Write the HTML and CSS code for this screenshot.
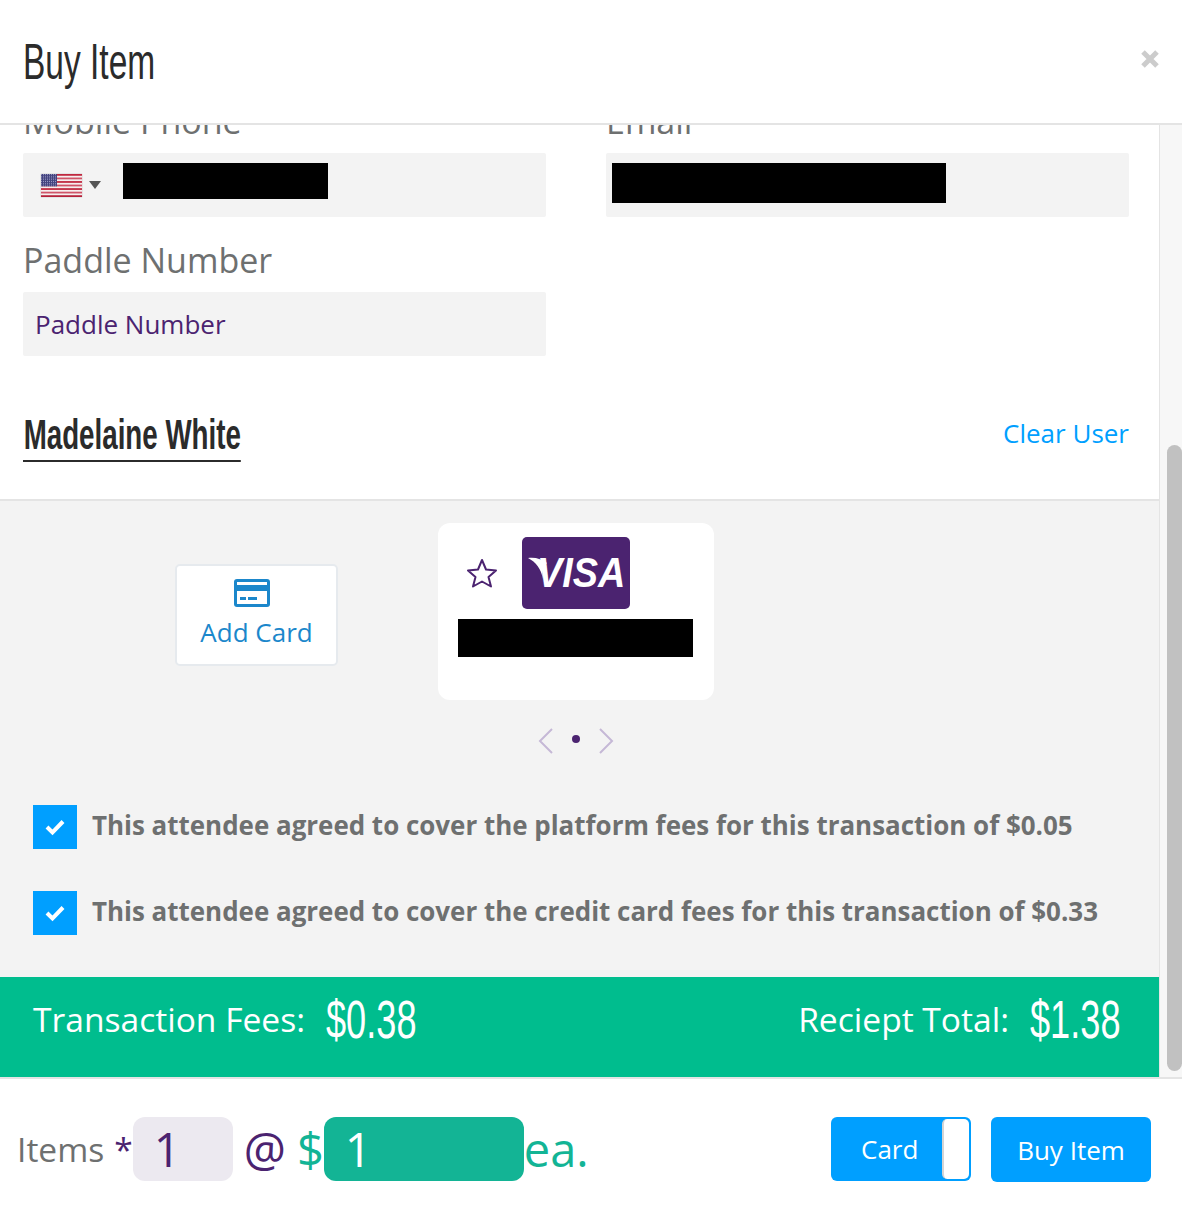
FILE: index.html
```html
<!DOCTYPE html>
<html>
<head>
  <title>Buy Item</title>
  <link rel="stylesheet" href="styles.css">
</head>
<body>
  <div class="modal">
    <div class="modal-header">
      <h1 class="modal-title">Buy Item</h1>
      <svg class="modal-close" width="20" height="20" viewBox="0 0 20 20">
        <path d="M3 3 L17 17 M17 3 L3 17" fill="none" stroke="#cccccc" stroke-width="5"/>
      </svg>
    </div>

    <div class="modal-middle">
      <div class="pane">
        <div class="pane-top">
          <div class="field-grid">
            <div class="field">
              <label class="field-label">Mobile Phone</label>
              <div class="field-box phone-box">
                <svg class="flag" width="41" height="23" viewBox="0 0 41 26" preserveAspectRatio="none">
                  <defs>
                    <pattern id="stars" width="2" height="2" patternUnits="userSpaceOnUse">
                      <rect width="2" height="2" fill="#44447f"/>
                      <rect width="1" height="1" fill="#9a9ac4"/>
                    </pattern>
                  </defs>
                  <rect width="41" height="26" fill="#f6eeee"/>
                  <rect y="0" width="41" height="2" fill="#c0283f"/>
                  <rect y="4" width="41" height="2" fill="#cf5468"/>
                  <rect y="8" width="41" height="2" fill="#c0283f"/>
                  <rect y="12" width="41" height="2" fill="#cf5468"/>
                  <rect y="16" width="41" height="2" fill="#c0283f"/>
                  <rect y="20" width="41" height="2" fill="#cf5468"/>
                  <rect y="24" width="41" height="2" fill="#b5213a"/>
                  <rect width="16" height="14" fill="url(#stars)"/>
                </svg>
                <span class="caret"></span>
                <span class="redact redact-phone"></span>
              </div>
            </div>
            <div class="field">
              <label class="field-label">Email</label>
              <div class="field-box email-box">
                <span class="redact redact-email"></span>
              </div>
            </div>
            <div class="field">
              <label class="field-label">Paddle Number</label>
              <div class="field-box paddle-box">Paddle Number</div>
            </div>
          </div>

          <div class="user-row">
            <span class="user-name">Madelaine White</span>
            <a class="clear-user">Clear User</a>
          </div>
        </div>

        <div class="pane-gray">
          <div class="card-row">
            <div class="add-card">
              <svg class="add-card-icon" width="36" height="28" viewBox="0 0 36 28">
                <rect width="36" height="28" rx="3" fill="#1b87cb"/>
                <rect x="3" y="3" width="30" height="3" fill="#fff"/>
                <rect x="3" y="12" width="30" height="13" fill="#fff"/>
                <rect x="6" y="18" width="6" height="3" fill="#1b87cb"/>
                <rect x="14" y="18" width="9" height="3" fill="#1b87cb"/>
              </svg>
              <span class="add-card-text">Add Card</span>
            </div>
            <div class="saved-card">
              <div class="saved-card-top">
                <svg class="star" width="32" height="30" viewBox="0 0 32 30">
                  <path d="M16 2 L20 11.5 L30 12.5 L22.5 19 L25 28.5 L16 23.5 L7 28.5 L9.5 19 L2 12.5 L12 11.5 Z" fill="none" stroke="#4b2370" stroke-width="2" stroke-linejoin="round"/>
                </svg>
                <div class="visa-logo">
                  <svg class="visa-swoosh" width="22" height="26" viewBox="0 0 22 26">
                    <path d="M1 1 C8 0 15 2 20 6 C16 9 15 14 16 22 C14 12 9 5 1 1 Z" fill="#fff"/>
                  </svg>
                  <span class="visa-text">VISA</span>
                </div>
              </div>
              <span class="redact redact-card"></span>
            </div>
          </div>

          <div class="carousel-nav">
            <svg width="16" height="28" viewBox="0 0 16 28"><path d="M14 2 L2 14 L14 26" fill="none" stroke="#c5b8d6" stroke-width="2"/></svg>
            <span class="carousel-dot"></span>
            <svg width="16" height="28" viewBox="0 0 16 28"><path d="M2 2 L14 14 L2 26" fill="none" stroke="#c5b8d6" stroke-width="2"/></svg>
          </div>

          <div class="agree-row">
            <span class="checkbox">
              <svg width="22" height="18" viewBox="0 0 22 18"><path d="M3 9 L8.5 14.5 L19 3.5" fill="none" stroke="#fff" stroke-width="4"/></svg>
            </span>
            <span class="agree-text">This attendee agreed to cover the platform fees for this transaction of $0.05</span>
          </div>
          <div class="agree-row">
            <span class="checkbox">
              <svg width="22" height="18" viewBox="0 0 22 18"><path d="M3 9 L8.5 14.5 L19 3.5" fill="none" stroke="#fff" stroke-width="4"/></svg>
            </span>
            <span class="agree-text">This attendee agreed to cover the credit card fees for this transaction of $0.33</span>
          </div>
        </div>

        <div class="totals">
          <div class="total-item">
            <span class="total-label">Transaction Fees:</span>
            <span class="total-value">$0.38</span>
          </div>
          <div class="total-item">
            <span class="total-label">Reciept Total:</span>
            <span class="total-value">$1.38</span>
          </div>
        </div>
      </div>

      <div class="scroll-track">
        <div class="scroll-thumb"></div>
      </div>
    </div>

    <div class="modal-footer">
      <div class="price-line">
        <span class="items-label">Items</span>
        <span class="items-star">*</span>
        <span class="qty-input">1</span>
        <span class="at-sign">@</span>
        <span class="dollar">$</span>
        <span class="price-input">1</span>
        <span class="each">ea.</span>
      </div>
      <div class="footer-actions">
        <div class="pay-toggle">
          <span class="pay-toggle-label">Card</span>
          <span class="pay-toggle-knob"></span>
        </div>
        <button class="buy-btn">Buy Item</button>
      </div>
    </div>
  </div>
</body>
</html>
```

FILE: styles.css
```css
* {
  box-sizing: border-box;
}

html, body {
  height: 100%;
}

body {
  margin: 0;
  background-color: #ffffff;
  color: #6e7070;
  font-family: 'Open Sans', sans-serif;
  overflow: hidden;
}

.modal {
  display: flex;
  flex-direction: column;
  width: 1182px;
  height: 1226px;
}

.modal-header {
  display: flex;
  align-items: center;
  justify-content: space-between;
  height: 125px;
  flex: none;
  padding: 1px 22px 0 23px;
  border-bottom: 2px solid #e4e4e4;
}

/* no condensed font here, so the heading fonts are squeezed */
.modal-title {
  margin: 0;
  font-family: 'Liberation Sans', sans-serif;
  font-weight: 400;
  font-size: 50px;
  color: #2b2b2b;
  white-space: nowrap;
  transform: scaleX(.67);
  transform-origin: left center;
}

.modal-close {
  margin-top: -7px;
}

.modal-middle {
  display: flex;
  height: 952px;
  flex: none;
}

.pane {
  width: 1160px;
  border-right: 1px solid #e4e4e4;
  overflow: hidden;
}

.scroll-track {
  width: 22px;
  padding: 320px 0 6px 7px;
  background: #f7f7f7;
}

.scroll-thumb {
  height: 100%;
  background: #c1c1c1;
  border-radius: 8px;
}

.pane-top {
  height: 400px;
  padding: 0 30px 0 23px;
  border-bottom: 2px solid #e4e4e4;
}

/* the pane is scrolled a little, label is cut at the top */
.field-grid {
  display: grid;
  grid-template-columns: 523px 523px;
  column-gap: 60px;
  row-gap: 23px;
  margin-top: -24px;
}

.field-label {
  display: block;
  height: 52px;
  font-size: 34px;
  line-height: 40px;
}

.field-box {
  display: flex;
  align-items: center;
  height: 64px;
  background: #f3f3f3;
  border-radius: 2px;
}

.phone-box {
  padding-left: 18px;
}

.email-box {
  padding-left: 6px;
}

.paddle-box {
  padding-left: 12px;
  font-size: 26px;
  color: #4b2370;
}

.flag {
  box-shadow: 0 0 1px #999;
}

.caret {
  width: 0;
  height: 0;
  margin: 0 22px 0 7px;
  border-left: 6px solid transparent;
  border-right: 6px solid transparent;
  border-top: 8px solid #555;
}

.redact {
  display: block;
  background: #000;
}

.redact-phone {
  width: 205px;
  height: 36px;
  margin-top: -8px;
}

.redact-email {
  width: 334px;
  height: 40px;
  margin-top: -5px;
}

.redact-card {
  width: 235px;
  height: 38px;
  margin: 10px 0 0 20px;
}

.user-row {
  display: flex;
  align-items: center;
  justify-content: space-between;
  margin-top: 56px;
}

.user-name {
  padding: 0 0 2px 1px;
  border-bottom: 2px solid #2b2b2b;
  font-family: 'Liberation Sans', sans-serif;
  font-weight: 700;
  font-size: 42px;
  line-height: 46px;
  color: #2b2b2b;
  white-space: nowrap;
  transform: scaleX(.66);
  transform-origin: left center;
}

.clear-user {
  margin-top: -8px;
  font-size: 26px;
  color: #009fff;
}

.pane-gray {
  height: 476px;
  padding-top: 22px;
  background: #f3f3f3;
}

.card-row {
  display: flex;
  align-items: flex-start;
  gap: 100px;
  padding-left: 175px;
}

.add-card {
  display: flex;
  flex-direction: column;
  align-items: center;
  width: 163px;
  height: 102px;
  margin-top: 41px;
  padding-top: 13px;
  background: #fff;
  border: 2px solid #e6eaee;
  border-radius: 5px;
}

.add-card-icon {
  margin-left: -9px;
}

.add-card-text {
  margin-top: 7px;
  font-size: 26px;
  color: #1b87cb;
}

.saved-card {
  width: 276px;
  height: 177px;
  padding-top: 14px;
  background: #fff;
  border-radius: 12px;
}

.saved-card-top {
  display: flex;
  align-items: center;
  gap: 24px;
  padding-left: 28px;
}

.visa-logo {
  position: relative;
  display: flex;
  align-items: center;
  width: 108px;
  height: 72px;
  padding-left: 15px;
  background: #4b2370;
  border-radius: 5px;
}

.visa-swoosh {
  position: absolute;
  left: 5px;
  top: 20px;
}

.visa-text {
  font-family: 'Liberation Sans', sans-serif;
  font-style: italic;
  font-weight: 700;
  font-size: 42px;
  color: #fff;
  transform: scaleX(.9);
  transform-origin: left center;
}

.carousel-nav {
  display: flex;
  align-items: center;
  justify-content: center;
  gap: 18px;
  height: 28px;
  margin: 27px 7px 50px 0;
}

.carousel-dot {
  width: 8px;
  height: 8px;
  margin-top: -4px;
  background: #4b2370;
  border-radius: 50%;
}

.agree-row {
  display: flex;
  align-items: center;
  gap: 15px;
  height: 44px;
  margin: 0 0 42px 33px;
}

.checkbox {
  display: flex;
  align-items: center;
  justify-content: center;
  width: 44px;
  height: 44px;
  background: #009fff;
}

.agree-text {
  margin-top: -4px;
  font-size: 25.95px;
  font-weight: 700;
  white-space: nowrap;
}

.totals {
  display: flex;
  align-items: center;
  justify-content: space-between;
  height: 100px;
  padding: 0 41px 12px 33px;
  background: #00bd8e;
  color: #fff;
}

.total-item {
  display: flex;
  align-items: center;
  gap: 21px;
}

.total-label {
  margin-top: -5px;
  font-size: 33.6px;
}

.total-value {
  width: 88px;
  margin-top: -5px;
  font-family: 'Liberation Sans', sans-serif;
  font-size: 54px;
  white-space: nowrap;
  transform: scaleX(.67);
  transform-origin: left center;
}

.modal-footer {
  display: flex;
  align-items: center;
  justify-content: space-between;
  height: 149px;
  flex: none;
  padding: 0 31px 8px 17px;
  border-top: 2px solid #e4e4e4;
}

.price-line {
  display: flex;
  align-items: center;
  font-size: 47px;
}

.items-label {
  font-size: 33.6px;
}

.items-star {
  margin: 0 0 0 10px;
  font-size: 33.6px;
  color: #4b2370;
}

.qty-input,
.price-input {
  width: 100px;
  height: 64px;
  padding-left: 21px;
  border-radius: 12px;
  line-height: 64px;
}

.qty-input {
  background: #ece9f0;
  color: #4b2370;
}

.at-sign {
  margin: 0 11px;
  color: #4b2370;
}

.dollar {
  color: #13b495;
}

.price-input {
  width: 200px;
  background: #13b495;
  color: #fff;
}

.each {
  color: #13b495;
}

.footer-actions {
  display: flex;
  align-items: flex-start;
  gap: 20px;
  margin-top: 2px;
}

.pay-toggle {
  display: flex;
  justify-content: space-between;
  align-items: center;
  width: 140px;
  height: 64px;
  padding: 2px 2px 2px 30px;
  background: #009fff;
  border-radius: 6px;
}

.pay-toggle-label {
  font-size: 26px;
  color: #fff;
}

.pay-toggle-knob {
  width: 27px;
  height: 100%;
  background: #fff;
  border-left: 2px solid #d4d4d4;
  border-radius: 5px;
}

.buy-btn {
  width: 160px;
  height: 65px;
  padding: 0;
  border: none;
  border-radius: 6px;
  background: #009fff;
  color: #fff;
  font-family: 'Open Sans', sans-serif;
  font-size: 26px;
}
```
